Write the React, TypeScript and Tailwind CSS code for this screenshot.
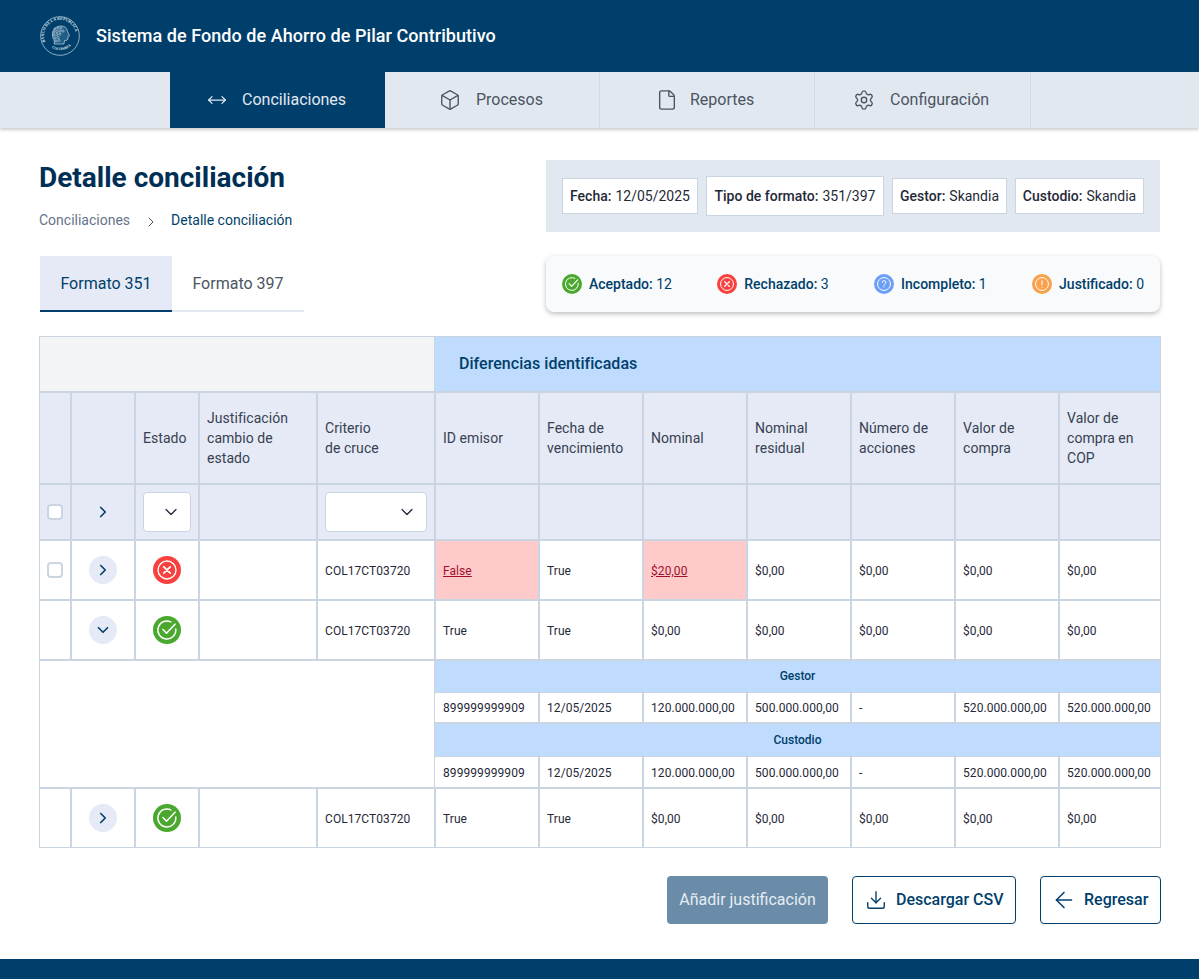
import React from "react";
import { Box, File, Settings, ChevronRight, ChevronDown, Download, ArrowLeft, MoveHorizontal } from "lucide-react";

function Logo() {
  const curls: [number, number][] = [
    [15, 13], [18, 12], [21, 12], [14, 16], [17, 15.5], [20, 15], [23, 15], [14, 19], [17, 18.5], [20, 18],
    [15, 22], [18, 21.5], [16, 25], [19, 24.5],
  ];
  return (
    <svg width="40" height="40" viewBox="0 0 40 40" fill="none">
      <defs>
        <path id="lg-top" d="M5.2 26 A16 16 0 1 1 34.8 26" />
        <path id="lg-bot" d="M7 27 A15.5 15.5 0 0 0 33 27" />
      </defs>
      <circle cx="20" cy="20" r="19.3" stroke="#cfdbe6" strokeWidth="0.7" />
      <text fontSize="4" fill="#dbe5ec" fontFamily="Liberation Serif, serif" fontWeight="700">
        <textPath href="#lg-top">BANCO DE LA REPUBLICA</textPath>
      </text>
      <text fontSize="3.6" fill="#dbe5ec" fontFamily="Liberation Serif, serif" fontWeight="700">
        <textPath href="#lg-bot" startOffset="22%">COLOMBIA</textPath>
      </text>
      <path
        d="M14 28c1-2 0-4-1-6-2-5 1-12 8-12 4 0 6 2 6.500 5.500l2 4.500-1.800.8.300 2.200-1 1.200-2.500.3-.5 3.500z"
        fill="#1f5c86"
        stroke="#c6d5e0"
        strokeWidth="0.7"
      />
      {curls.map(([x, y], i) => (
        <circle key={i} cx={x} cy={y} r="1.1" stroke="#c6d5e0" strokeWidth="0.6" />
      ))}
    </svg>
  );
}

function NavTab({ icon, label, active, cls }: { icon: React.ReactNode; label: string; active?: boolean; cls: string }) {
  return (
    <div
      className={
        "flex h-full items-center justify-start text-base " +
        cls +
        " " +
        (active ? "bg-[#003f6b] text-[#e2e8f0]" : "border-r border-[#d3dbe6] text-[#4b5563]")
      }
    >
      {icon}
      <span>{label}</span>
    </div>
  );
}

function Chip({ k, v, cls }: { k: string; v: string; cls: string }) {
  return (
    <div
      className={
        "flex shrink-0 items-center justify-center whitespace-nowrap border border-[#cbd5e1] bg-white text-sm text-[#1f2937] " +
        cls
      }
    >
      <span className="font-medium">{k}:</span>
      <span className="ml-1">{v}</span>
    </div>
  );
}

function StatusIcon({ kind, size }: { kind: "ok" | "bad" | "info" | "warn"; size: number }) {
  const fill = { ok: "#4aa82f", bad: "#f8403f", info: "#6d9ef6", warn: "#f9a04b" }[kind];
  return (
    <svg width={size} height={size} viewBox="0 0 28 28" fill="none">
      <circle cx="14" cy="14" r="14" fill={fill} />
      {kind === "ok" ? (
        <>
          <path d="M22.8 13A9 9 0 1 1 18 6" stroke="white" strokeWidth="1.4" strokeLinecap="round" />
          <path d="M10 13.500l3.500 3.700 8.500-9" stroke="white" strokeWidth="1.6" strokeLinecap="round" strokeLinejoin="round" />
        </>
      ) : (
        <circle cx="14" cy="14" r="9" stroke="white" strokeWidth="1.4" />
      )}
      {kind === "bad" && <path d="M10.800 10.800l6.400 6.400M17.200 10.800l-6.400 6.400" stroke="white" strokeWidth="1.800" strokeLinecap="round" />}
      {kind === "info" && (
        <>
          <path d="M11.600 11.800a2.500 2.500 0 1 1 3.600 2.200c-.8.4-1.200.9-1.200 1.600" stroke="white" strokeWidth="1.400" strokeLinecap="round" />
          <circle cx="14" cy="18" r="0.9" fill="white" />
        </>
      )}
      {kind === "warn" && (
        <>
          <path d="M14 9.500v5.500" stroke="white" strokeWidth="1.600" strokeLinecap="round" />
          <circle cx="14" cy="18.300" r="0.9" fill="white" />
        </>
      )}
    </svg>
  );
}

function Count({ kind, label, value }: { kind: "ok" | "bad" | "info" | "warn"; label: string; value: string }) {
  return (
    <div className="flex items-center gap-[7px] text-sm text-[#003f6b]">
      <StatusIcon kind={kind} size={20} />
      <span>
        <span className="font-medium">{label}:</span> {value}
      </span>
    </div>
  );
}

const cell = "border-r-2 border-b-2 border-[#cbd5e1] flex items-center";
const hcell = cell + " bg-[#e5eaf6] px-[7px] text-sm leading-5 tracking-[0.05px] text-[#374151]";
const hlast = "border-b-2 border-[#cbd5e1] flex items-center bg-[#e5eaf6] px-[7px] text-sm leading-5 tracking-[0.05px] text-[#374151]";
const dcell = cell + " bg-white px-[7px] pt-px text-xs tracking-[0.07px] text-[#1f2937]";
const dlast = "border-b-2 border-[#cbd5e1] flex items-center bg-white px-[7px] pt-px text-xs tracking-[0.07px] text-[#1f2937]";

function Check() {
  return <div className="h-4 w-4 rounded border-2 border-[#cbd5e1] bg-white" />;
}

function RoundBtn({ open }: { open?: boolean }) {
  return (
    <div className="flex h-7 w-7 items-center justify-center rounded-full bg-[#e5eaf6] text-[#003f6b]">
      {open ? <ChevronDown size={18} strokeWidth={2.2} /> : <ChevronRight size={18} strokeWidth={2.2} />}
    </div>
  );
}

function DataRow({ status, first, vals, noCheck, last }: { status: "ok" | "bad"; first?: boolean; vals: string[]; noCheck?: boolean; last?: boolean }) {
  const c = last ? cell.replace("border-b-2 ", "") : cell;
  const d = last ? dcell.replace("border-b-2 ", "") : dcell;
  const dl = last ? dlast.replace("border-b-2 ", "") : dlast;
  return (
    <>
      <div className={c + " justify-center bg-white"}>{!noCheck && <Check />}</div>
      <div className={c + " justify-center bg-white"}>
        <RoundBtn open={first} />
      </div>
      <div className={c + " justify-center bg-white"}>
        <StatusIcon kind={status} size={28} />
      </div>
      <div className={c + " bg-white"} />
      <div className={d}>COL17CT03720</div>
      {vals.map((v, i) => {
        const bad = v === "False" || v === "$20,00";
        const base = i === vals.length - 1 ? dl : d;
        return (
          <div key={i} className={base + (bad ? " !bg-[#fecaca]" : "")}>
            <span className={bad ? "text-[#a00f2c] underline" : ""}>{v}</span>
          </div>
        );
      })}
    </>
  );
}

function SubRow({ title, firstBlock }: { title: string; firstBlock?: boolean }) {
  const vals = ["899999999909", "12/05/2025", "120.000.000,00", "500.000.000,00", "-", "520.000.000,00", "520.000.000,00"];
  return (
    <>
      <div
        className={
          "col-span-7 -ml-px flex items-center justify-center border-b border-[#cbd5e1] bg-[#bfdbfe] text-xs font-medium text-[#003f6b] " +
          (firstBlock ? "pb-px" : "")
        }
      >
        {title}
      </div>
      {vals.map((v, i) => (
        <div
          key={i}
          className={
            "flex items-center border-b-2 border-[#cbd5e1] bg-white pt-px text-xs tracking-[0.07px] text-[#1f2937] " +
            (i < 6 ? "border-r-2 " : "") +
            (i === 0 ? "-ml-px pl-2 pr-[7px]" : "px-[7px]")
          }
        >
          {v}
        </div>
      ))}
    </>
  );
}

export default function App() {
  return (
    <div className="flex h-[979px] flex-col overflow-hidden bg-white font-['Roboto',sans-serif]">
      <header className="flex h-[72px] shrink-0 items-center gap-4 bg-[#003f6b] pl-10">
        <Logo />
        <h1 className="text-lg font-medium tracking-[0.06px] text-white">Sistema de Fondo de Ahorro de Pilar Contributivo</h1>
      </header>

      <nav className="flex h-14 shrink-0 bg-[#e2e8f0] pl-[170px] shadow-[0_2px_3px_rgba(0,0,0,0.2)]">
        <NavTab cls="w-[215px] gap-[15px] pl-[37px]" active label="Conciliaciones" icon={<MoveHorizontal size={20} strokeWidth={1.5} />} />
        <NavTab cls="w-[215px] gap-[15px] pl-[54px]" label="Procesos" icon={<Box size={22} strokeWidth={1.5} />} />
        <NavTab cls="w-[215px] gap-[12px] pl-[56px]" label="Reportes" icon={<File size={22} strokeWidth={1.5} />} />
        <NavTab cls="w-[216px] gap-[15px] pl-[38px]" label="Configuración" icon={<Settings size={22} strokeWidth={1.5} />} />
      </nav>

      <main className="flex flex-1 flex-col pl-[39px] pr-[38px] pt-8">
        <div className="flex items-start justify-between">
          <div>
            <h2 className="text-[28px] font-bold leading-9 text-[#002f55]">Detalle conciliación</h2>
            <div className="mt-[14px] flex items-center text-sm text-[#64748b]">
              <span>Conciliaciones</span>
              <ChevronRight size={16} strokeWidth={1.5} className="ml-[13px] mr-[12px] mt-[3px] text-[#475569]" />
              <span className="text-[#003f6b]">Detalle conciliación</span>
            </div>
          </div>
          <div className="mr-px flex h-[72px] w-[614px] items-center gap-2 bg-[#e2e8f0] px-4">
            <Chip k="Fecha" v="12/05/2025" cls="h-9 w-[136px]" />
            <Chip k="Tipo de formato" v="351/397" cls="h-10 w-[178px]" />
            <Chip k="Gestor" v="Skandia" cls="h-9 w-[115px]" />
            <Chip k="Custodio" v="Skandia" cls="h-9 w-[129px]" />
          </div>
        </div>

        <div className="mt-6 flex items-start justify-between">
          <div className="ml-px flex h-14 w-[264px] border-b-2 border-[#e2e8f0]">
            <div className="-mb-[2px] flex h-14 w-[132px] items-center justify-center border-b-2 border-[#003f6b] bg-[#e5eaf6] pt-[2px] text-base text-[#003f6b]">
              Formato 351
            </div>
            <div className="flex h-[54px] w-[132px] items-center justify-center pt-[2px] text-base text-[#4b5563]">Formato 397</div>
          </div>
          <div className="mr-px flex h-14 w-[614px] items-center justify-between rounded-lg bg-[#f8fafc] px-4 shadow-[0_2px_5px_rgba(0,0,0,0.25)]">
            <Count kind="ok" label="Aceptado" value="12" />
            <Count kind="bad" label="Rechazado" value="3" />
            <Count kind="info" label="Incompleto" value="1" />
            <Count kind="warn" label="Justificado" value="0" />
          </div>
        </div>

        <div className="mt-6 grid grid-cols-[32px_64px_64px_118px_118px_104px_104px_104px_104px_104px_104px_100px] grid-rows-[56px_92px_56px_60px_60px_128px_58px] border border-[#cbd5e1]">
          <div className="col-span-5 mr-px border-r border-b-2 border-[#cbd5e1] bg-[#f3f4f6]" />
          <div className="col-span-7 -ml-px flex items-center border-b-2 border-[#cbd5e1] bg-[#bfdbfe] pl-6 text-base font-medium tracking-[0.04px] text-[#003f6b]">
            Diferencias identificadas
          </div>

          <div className={hcell} />
          <div className={hcell} />
          <div className={hcell}>Estado</div>
          <div className={hcell}>Justificación cambio de estado</div>
          <div className={hcell}>
            <span>
              Criterio
              <br />
              de cruce
            </span>
          </div>
          <div className={hcell}>ID emisor</div>
          <div className={hcell}>Fecha de vencimiento</div>
          <div className={hcell}>Nominal</div>
          <div className={hcell}>Nominal residual</div>
          <div className={hcell}>Número de acciones</div>
          <div className={hcell}>Valor de compra</div>
          <div className={hlast}>Valor de compra en COP</div>

          <div className={hcell + " justify-center"}>
            <Check />
          </div>
          <div className={hcell + " justify-center"}>
            <span className="text-[#003f6b]">
              <ChevronRight size={18} strokeWidth={2.2} />
            </span>
          </div>
          <div className={hcell}>
            <div className="flex h-10 w-12 shrink-0 items-center justify-end rounded border border-[#cbd5e1] bg-white pr-[9px] text-[#1f2937]">
              <ChevronDown size={20} strokeWidth={1.5} />
            </div>
          </div>
          <div className={hcell} />
          <div className={hcell}>
            <div className="flex h-10 w-[102px] shrink-0 items-center justify-end rounded border border-[#cbd5e1] bg-white pr-[9px] text-[#1f2937]">
              <ChevronDown size={20} strokeWidth={1.5} />
            </div>
          </div>
          <div className={hcell} />
          <div className={hcell} />
          <div className={hcell} />
          <div className={hcell} />
          <div className={hcell} />
          <div className={hcell} />
          <div className={hlast} />

          <DataRow status="bad" vals={["False", "True", "$20,00", "$0,00", "$0,00", "$0,00", "$0,00"]} />
          <DataRow status="ok" first noCheck vals={["True", "True", "$0,00", "$0,00", "$0,00", "$0,00", "$0,00"]} />

          <div className="col-span-5 border-b-2 border-[#cbd5e1] bg-white">
            <div className="mr-px h-full border-r border-[#cbd5e1]" />
          </div>
          <div className="col-span-7 grid grid-cols-[104px_104px_104px_104px_104px_104px_100px] grid-rows-[32px_31px_33px_32px]">
            <SubRow title="Gestor" firstBlock />
            <SubRow title="Custodio" />
          </div>

          <DataRow status="ok" noCheck last vals={["True", "True", "$0,00", "$0,00", "$0,00", "$0,00", "$0,00"]} />
        </div>

        <div className="mt-7 flex justify-end gap-6">
          <button className="flex h-12 w-[161px] items-center justify-center rounded bg-[#6a8ca8] text-base text-[#e5edf3]">
            Añadir justificación
          </button>
          <button className="flex h-12 w-[164px] items-center justify-start gap-[9px] rounded border border-[#003f6b] bg-white pl-[12px] text-base font-medium text-[#003f6b]">
            <Download size={22} strokeWidth={1.5} />
            Descargar CSV
          </button>
          <button className="flex h-12 w-[121px] items-center justify-start gap-[7px] rounded border border-[#003f6b] bg-white pl-[10px] text-base font-medium text-[#003f6b]">
            <ArrowLeft size={26} strokeWidth={1.4} />
            Regresar
          </button>
        </div>
      </main>

      <footer className="h-5 shrink-0 bg-[#003f6b]" />
    </div>
  );
}
